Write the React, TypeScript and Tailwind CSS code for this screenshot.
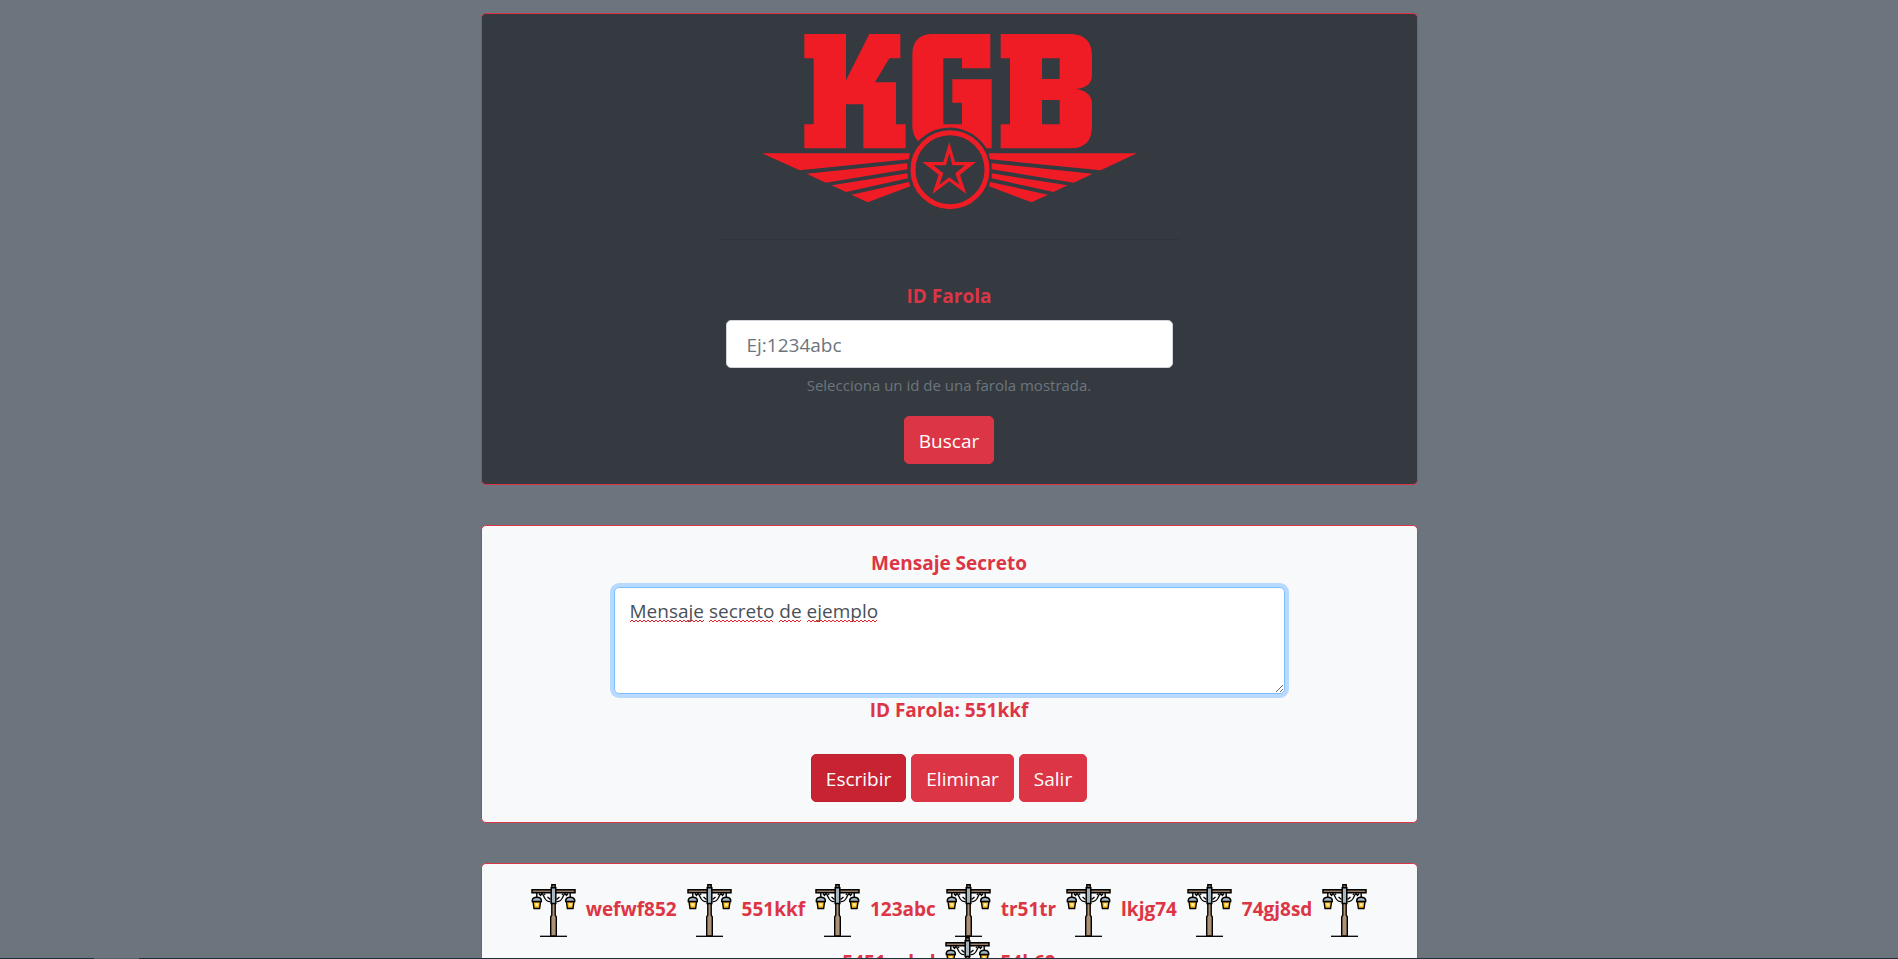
import { useState } from 'react';
import type { ReactNode } from 'react';

function KgbLogo() {
  return (
    <svg viewBox="0 0 1125 528" className="h-[176px] w-[375px]" fill="#ef1c25" role="img" aria-label="KGB">
      <path d="M127 0H252V139L322 0H415V73H382L339 145H402V271H431V343H304V211H252V343H127V271H155V73H127Z" />
      <path d="M513 0H685V103H600V73H544V271H600V206H571V136H689V343H673A129 129 0 0 0 468 322Q451 302 451 275V62Q451 0 513 0Z" />
      <path
        fillRule="evenodd"
        d="M716 0H930Q990 4 990 66V123Q990 160 942 165Q990 172 990 210V277Q990 343 926 343H716V271H744V73H716ZM840 73V135H893V73ZM840 198V271H893V198Z"
      />
      <path d="M0 358H444L440 376L113 409Z" />
      <path d="M436 388V406L191 446L134 419Z" />
      <path d="M436 418L438 433L252 474L209 454Z" />
      <path d="M441 444L445 457L317 505L268 482Z" />
      <path d="M1125 358H680L684 376L1016 409Z" />
      <path d="M689 388V406L935 446L992 419Z" />
      <path d="M689 418V433L874 474L917 454Z" />
      <path d="M684 444L681 457L809 505L858 482Z" />
      <circle cx="564" cy="407" r="111" fill="none" stroke="#ef1c25" strokeWidth="15" />
      <path
        fillRule="evenodd"
        d="M562 324L579 384H642L594 422L613 480L562 442L511 480L530 422L481 384H544ZM562 358L552 394H514L544 418L532 452L562 430L592 452L580 418L609 394H571Z"
      />
    </svg>
  );
}

function Lamp() {
  return (
    <svg viewBox="0 0 53 53" className="mx-px inline-block size-[53px] align-middle" fill="none" stroke="#000" aria-hidden="true">
      <path d="M13 52.3H40" strokeWidth="1.3" />
      <path d="M24.8 19V31L23.700 33V52H29.300V33L28.200 31V19Z" fill="#ad9176" strokeWidth="1.4" />
      <path d="M5 5.700H48V8.700H5Z" fill="#987b62" strokeWidth="1.5" />
      <path d="M24.800 4V.8H28.200V4" fill="#987b62" strokeWidth="1.4" />
      <path
        d="M12 9.500L13.500 11.500L15 9.500C18 12 17 18 23.500 17.700M41 9.500L39.500 11.500L38 9.500C35 12 36 18 29.500 17.700M17 9.500L18 11M36 9.500L35 11M20.500 13L23.500 15.500M32.500 13L29.500 15.500"
        strokeWidth="1.3"
      />
      <path d="M24.200 3.800H28.800V19.500H24.200Z" fill="#a7b6be" strokeWidth="1.5" />
      <path d="M9.800 9V13M43.200 9V13" strokeWidth="1.4" />
      <path d="M6 17.500H13.600L12.600 24.500H7ZM39.400 17.500H47L46 24.500H40.400Z" fill="#ffb914" strokeWidth="1.4" />
      <path
        d="M5.300 17.500V16Q6 13.300 9.800 13.300T14.300 16V17.500ZM38.700 17.500V16Q39.500 13.300 43.200 13.300T47.700 16V17.500Z"
        fill="#a7b6be"
        strokeWidth="1.4"
      />
      <path d="M8.500 19.300H11.200V22H8.500ZM41.900 19.300H44.600V22H41.900Z" fill="#fff0b0" stroke="none" />
    </svg>
  );
}

function zigzag(from: number, to: number) {
  let d = `M${from} 3`;
  for (let x = from + 2, up = true; x <= to; x += 2, up = !up) d += `L${x} ${up ? 1 : 3}`;
  return d;
}

function Card({ className, children }: { className: string; children: ReactNode }) {
  return (
    <section className={`rounded-[5px] border border-[#dc3545] p-5 text-center ${className}`}>{children}</section>
  );
}

function Button({ active = false, children }: { active?: boolean; children: ReactNode }) {
  return (
    <button
      type="button"
      className={`h-12 rounded-[5px] border px-3.5 pt-0.5 text-white ${active ? 'border-[#bd2130] bg-[#c82333]' : 'border-[#dc3545] bg-[#dc3545]'}`}
    >
      {children}
    </button>
  );
}

const lamps = ['wefwf852', '551kkf', '123abc', 'tr51tr', 'lkjg74', '74gj8sd', '5451wdsd', '54k69'];

export default function App() {
  const [id, setId] = useState('');
  const [message, setMessage] = useState('Mensaje secreto de ejemplo');
  return (
    <div className="h-screen overflow-y-auto bg-[#6c757d] font-['Open_Sans','Noto_Sans',sans-serif] text-[19px] leading-[30px] [scrollbar-width:none]">
      <main className="mx-auto flex w-full max-w-[937px] flex-col gap-10 pt-[13px] pb-10">
        <Card className="bg-[#343a40]">
          <div className="flex flex-col items-center">
            <KgbLogo />
            <hr className="mt-[29px] mb-10 w-full max-w-[460px] border-black/10" />
            <label htmlFor="lamp-id" className="mt-px mb-[9px] font-bold text-[#dc3545]">
              ID Farola
            </label>
            <input
              id="lamp-id"
              type="text"
              value={id}
              onChange={(e) => setId(e.target.value)}
              placeholder="Ej:1234abc"
              className="h-12 w-full max-w-[447px] rounded-[5px] border border-[#ced4da] bg-white px-5 pt-0.5 text-[#495057] placeholder:text-[#6c757d]"
            />
            <small className="mt-[5px] mb-[19px] text-[15px] leading-6 text-[#6c757d]">
              Selecciona un id de una farola mostrada.
            </small>
            <Button>Buscar</Button>
          </div>
        </Card>

        <Card className="bg-[#f8f9fa]">
          <div className="flex flex-col items-center">
            <label htmlFor="message" className="mt-0.5 mb-[9px] font-bold text-[#dc3545]">
              Mensaje Secreto
            </label>
            <div className="relative flex w-full max-w-[671px]">
              <textarea
                id="message"
                rows={3}
                spellCheck={false}
                value={message}
                onChange={(e) => setMessage(e.target.value)}
                className="h-[107px] w-full resize rounded-[5px] border border-[#80bdff] bg-white px-[15px] py-2 text-[#495057] ring-4 ring-[#b8daff] outline-none"
              />
              <svg className="pointer-events-none absolute top-8 left-4 h-1 w-[260px]" fill="none" stroke="#e8202a" aria-hidden="true">
                <path d={zigzag(0, 74)} />
                <path d={zigzag(79, 144)} />
                <path d={zigzag(149, 171)} />
                <path d={zigzag(177, 248)} />
              </svg>
            </div>
            <p className="mt-px mb-[29px] font-bold text-[#dc3545]">ID Farola: 551kkf</p>
            <div className="flex gap-[5px]">
              <Button active>Escribir</Button>
              <Button>Eliminar</Button>
              <Button>Salir</Button>
            </div>
          </div>
        </Card>

        <Card className="bg-[#f8f9fa] font-bold text-[#dc3545]">
          {lamps.map((name) => (
            <span key={name}>
              <Lamp /> {name}{' '}
            </span>
          ))}
        </Card>
      </main>
      <div className="fixed inset-x-0 bottom-0 flex h-px bg-[#222e3c]">
        <div className="ml-[94px] w-[45px] bg-[#596068]" />
      </div>
    </div>
  );
}
